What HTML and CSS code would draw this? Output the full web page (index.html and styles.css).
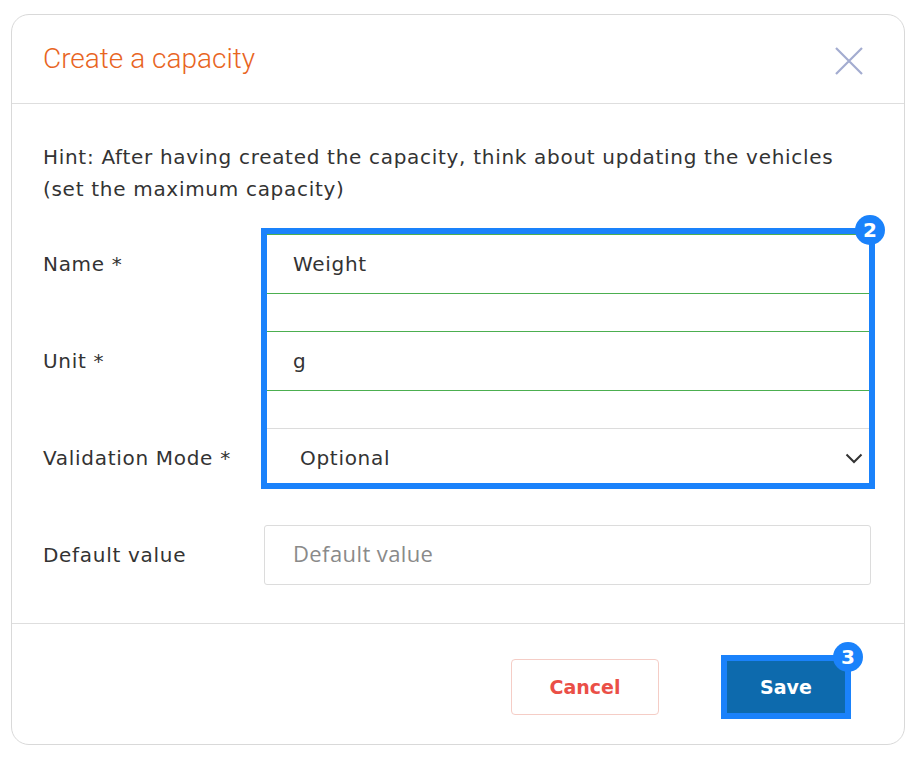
FILE: index.html
```html
<!DOCTYPE html>
<html lang="en">
<head>
  <meta charset="UTF-8" />
  <meta name="viewport" content="width=device-width, initial-scale=1.0"/>
  <title>Create a capacity</title>
  <link rel="stylesheet" href="styles.css">
</head>
<body>
  <div class="modal">
    <div class="modal-header">
      <h2>Create a capacity</h2>
      <button class="close-btn" aria-label="Close">
        <svg width="28" height="28" viewBox="0 0 28 28">
          <path d="M1 1 L27 27 M27 1 L1 27" stroke="#a3acd0" stroke-width="2.2" fill="none"/>
        </svg>
      </button>
    </div>

    <div class="modal-body">
      <p class="hint">Hint: After having created the capacity, think about updating the vehicles (set the maximum capacity)</p>

      <div class="form-grid">
        <label>Name *</label>
        <input type="text" class="field valid" value="Weight" />

        <label>Unit *</label>
        <input type="text" class="field valid" value="g" />

        <label>Validation Mode *</label>
        <div class="field select">
          <span>Optional</span>
          <svg width="18" height="11" viewBox="0 0 18 11">
            <path d="M1.5 1.5 L9 9 L16.5 1.5" stroke="#333" stroke-width="2" fill="none"/>
          </svg>
        </div>

        <!-- tour highlight over the first three fields -->
        <div class="highlight"><span class="badge">2</span></div>

        <label>Default value</label>
        <input type="text" class="field" placeholder="Default value" />
      </div>
    </div>

    <div class="modal-footer">
      <button class="btn btn-cancel">Cancel</button>
      <button class="btn btn-save">Save<span class="badge">3</span></button>
    </div>
  </div>
</body>
</html>
```

FILE: styles.css
```css
body {
  margin: 0;
  background: #fff;
  font-family: "DejaVu Sans", sans-serif;
  color: #333;
}

.modal {
  box-sizing: border-box;
  width: 894px;
  height: 731px;
  margin: 14px 0 0 11px;
  border: 1px solid #d9d9d9;
  border-radius: 18px;
  display: flex;
  flex-direction: column;
}

.modal-header {
  height: 88px;
  border-bottom: 1px solid #dedede;
  display: flex;
  align-items: center;
  justify-content: space-between;
  padding: 0 41px 0 31px;
}

.modal-header h2 {
  margin: 0;
  font-family: Roboto, sans-serif;
  font-weight: 300;
  font-size: 28px;
  color: #e8651f;
  padding-bottom: 1px;
}

.close-btn {
  border: none;
  background: none;
  padding: 0;
  width: 28px;
  height: 28px;
  cursor: pointer;
  margin-top: 3px;
}

.modal-body {
  flex: 1;
  padding: 37px 32px 0 31px;
  border-bottom: 1px solid #dedede;
}

.hint {
  margin: 0 0 29px;
  font-size: 20px;
  letter-spacing: 0.7px;
  line-height: 32px;
  color: #333;
}

.form-grid {
  position: relative;
  display: grid;
  grid-template-columns: 221px 607px;
  grid-auto-rows: 60px;
  row-gap: 37px;
  align-items: center;
}

.form-grid label {
  font-size: 20px;
  letter-spacing: 0.7px;
  color: #333;
}

.field {
  box-sizing: border-box;
  height: 60px;
  width: 100%;
  border: 1px solid #dcdcdc;
  border-radius: 3px;
  padding: 0 28px;
  font-family: "DejaVu Sans", sans-serif;
  font-size: 20px;
  letter-spacing: 0.7px;
  color: #333;
  background: #fff;
  outline: none;
}

.field::placeholder {
  font-family: "Open Sans", sans-serif;
  font-size: 22px;
  letter-spacing: 0.4px;
  color: #8a8a8a;
}

.field.valid {
  border-color: #4caf50;
  border-radius: 0;
}

.select {
  display: flex;
  align-items: center;
  justify-content: space-between;
  padding: 0 7px 0 35px;
  border-radius: 0;
}

.highlight {
  position: absolute;
  grid-column: 2;
  grid-row: 1 / 4;
  top: -6px;
  right: -3px;
  bottom: -1px;
  left: -3px;
  border: 6px solid #1a82fb;
  pointer-events: none;
}

.badge {
  position: absolute;
  width: 30px;
  height: 30px;
  border-radius: 50%;
  background: #1a82fb;
  color: #fff;
  font-family: "DejaVu Sans", sans-serif;
  font-weight: bold;
  font-size: 20px;
  letter-spacing: 0;
  line-height: 30px;
  text-align: center;
}

.highlight .badge {
  top: -19px;
  right: -16px;
}

.modal-footer {
  display: flex;
  justify-content: flex-end;
  align-items: center;
  gap: 68px;
  padding: 35px 59px 29px;
}

.btn {
  font-family: "DejaVu Sans", sans-serif;
  font-weight: bold;
  font-size: 19px;
  cursor: pointer;
}

.btn-cancel {
  width: 148px;
  height: 56px;
  background: #fff;
  border: 1px solid #f5cdc6;
  border-radius: 4px;
  color: #ea4f47;
}

.btn-save {
  position: relative;
  width: 118px;
  height: 52px;
  background: #0d6aad;
  border: none;
  color: #fff;
  box-shadow: 0 0 0 6px #1a82fb;
}

.btn-save .badge {
  top: -19px;
  right: -18px;
}
```
